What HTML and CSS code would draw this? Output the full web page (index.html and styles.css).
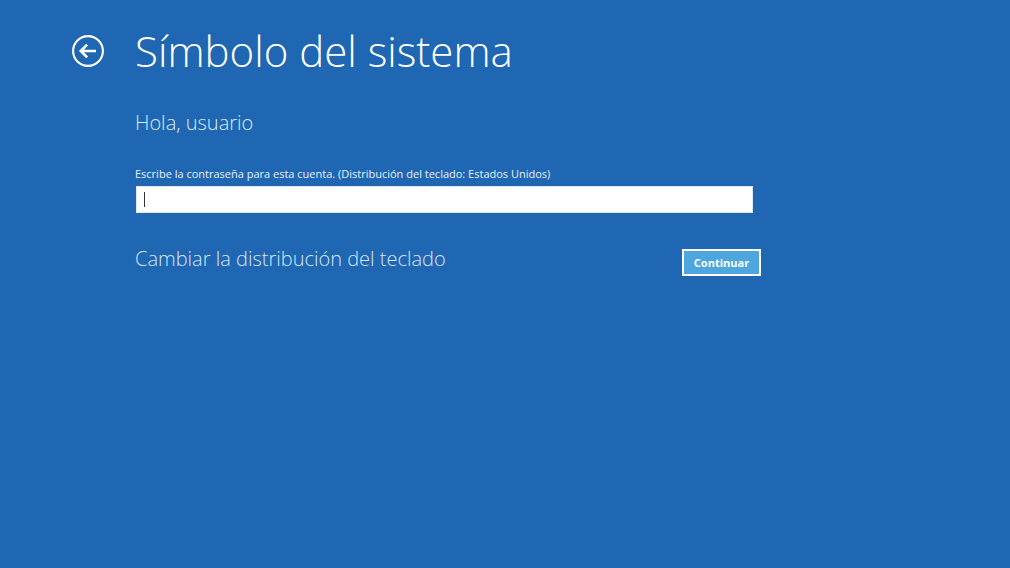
FILE: index.html
```html
<!DOCTYPE html>
<html lang="es">
<head>
<meta charset="utf-8">
<meta name="viewport" content="width=device-width, initial-scale=1">
<title>Símbolo del sistema</title>
<link rel="stylesheet" href="styles.css">
</head>
<body>
<main class="screen">
  <header class="header">
    <button class="back" type="button" aria-label="Atrás">
      <svg class="back-icon" viewBox="0 0 32 32" aria-hidden="true">
        <circle cx="16" cy="16" r="14.9" fill="none" stroke="currentColor" stroke-width="2.1"/>
        <path d="M24 16H9.5M15.2 9.6L8.8 16L15.2 22.4" fill="none" stroke="currentColor" stroke-width="2.7"/>
      </svg>
    </button>
    <h1 class="title">Símbolo del sistema</h1>
  </header>
  <form class="form">
    <h2 class="greeting">Hola, usuario</h2>
    <label class="label" for="password">Escribe la contraseña para esta cuenta. (Distribución del teclado: Estados Unidos)</label>
    <input class="password" id="password" type="password">
    <div class="actions">
      <a class="layout-link" href="#">Cambiar la distribución del teclado</a>
      <button class="continue" type="submit">Continuar</button>
    </div>
  </form>
</main>
</body>
</html>
```

FILE: styles.css
```css
* {
  box-sizing: border-box;
}

body {
  margin: 0;
  min-height: 100vh;
  background: #1f67b3;
  color: #fff;
  font-family: "Open Sans", "Noto Sans", sans-serif;
}

.screen {
  padding: 21px 72px;
}

.header {
  display: flex;
  align-items: center;
  gap: 31px;
}

.back {
  display: flex;
  padding: 0;
  border: 0;
  background: none;
  color: #fff;
}

.back-icon {
  width: 32px;
  height: 32px;
}

.title {
  margin: 0;
  font-size: 42px;
  font-weight: 300;
  line-height: 60px;
}

.form {
  display: flex;
  flex-direction: column;
  max-width: 689px;
  padding: 27px 0 0 63px;
}

.greeting {
  margin: 0;
  color: #dfebf8;
  font-size: 20px;
  font-weight: 300;
  line-height: 30px;
}

.label {
  margin-top: 28px;
  color: #e6f0fa;
  font-size: 11px;
  line-height: 16px;
}

/* The white bar near the left edge is the text cursor. */
.password {
  height: 27px;
  margin: 4px 8px 0 1px;
  padding: 0 8px;
  border: 1px solid #dbe8f5;
  border-radius: 0;
  outline: 0;
  background: linear-gradient(#333, #333) 7px 5px / 1px 15px no-repeat #fff;
  color: #222;
  font: inherit;
  font-size: 12px;
}

.actions {
  display: flex;
  align-items: center;
  justify-content: space-between;
  margin-top: 31px;
}

.layout-link {
  margin-bottom: 6px;
  color: #d6e5f6;
  font-size: 20px;
  font-weight: 300;
  line-height: 30px;
  text-decoration: none;
}

.continue {
  height: 27px;
  width: 79px;
  padding: 0;
  border: 2px solid #fff;
  background: #4da6de;
  color: #fff;
  font-family: inherit;
  font-size: 11px;
  font-weight: 700;
}
```
